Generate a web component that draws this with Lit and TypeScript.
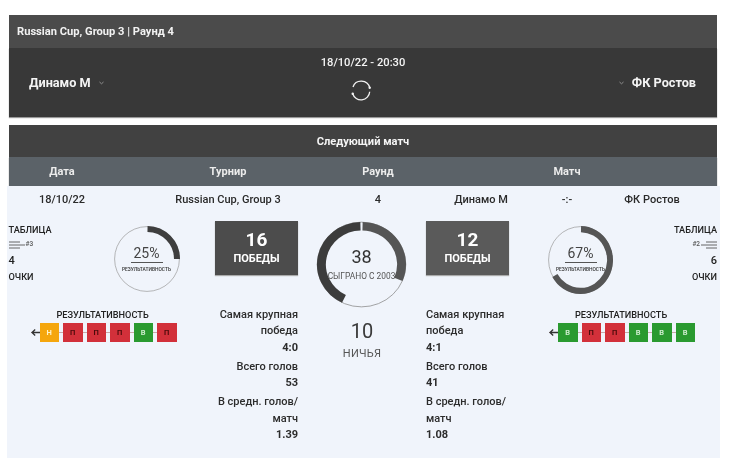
import { LitElement, html, css, svg } from "lit";
import { customElement } from "lit/decorators.js";

const polar = (cx: number, cy: number, r: number, deg: number) => {
  const a = ((deg - 90) * Math.PI) / 180;
  return [cx + r * Math.cos(a), cy + r * Math.sin(a)];
};
const arc = (cx: number, cy: number, r: number, from: number, to: number) => {
  const [x1, y1] = polar(cx, cy, r, from);
  const [x2, y2] = polar(cx, cy, r, to);
  return `M${x1.toFixed(2)} ${y1.toFixed(2)}A${r} ${r} 0 ${to - from > 180 ? 1 : 0} 1 ${x2.toFixed(2)} ${y2.toFixed(2)}`;
};

const chev = html`<svg class="chev" width="5" height="4" viewBox="0 0 5 4"><path d="M.5 1l2 1.8L4.500 1" fill="none" stroke="#8f8f8f" stroke-width="1"/></svg>`;

@customElement("app-root")
export class AppRoot extends LitElement {
  static styles = css`
    :host { display: block; width: 730px; height: 474px; background: #fff; font-family: Roboto, "Noto Sans", sans-serif; color: #222; overflow: hidden; filter: blur(0.4px); }
    .page { padding: 15px 13px 0 9px; display: flex; flex-direction: column; }
    .title { height: 33px; background: #4b4b4b; color: #f2f2f2; font-size: 11.15px; font-weight: 700; display: flex; align-items: center; padding-left: 8px; }
    .match { height: 69px; background: #383838; color: #f4f4f4; display: grid; grid-template-columns: 1fr auto 1fr; box-shadow: 0 1px 1px #999; }
    .team { display: flex; align-items: center; gap: 8px; font-size: 12.7px; font-weight: 700; height: 69px; }
    .team.l { padding-left: 20px; }
    .team.r { justify-content: flex-end; padding-right: 21px; }
    .mid { display: flex; flex-direction: column; align-items: center; font-size: 11.2px; font-weight: 500; padding-top: 8px; gap: 11px; }
    .sync { margin-right: 3px; }
    .next { margin-top: 8px; height: 32px; background: #414141; color: #f4f4f4; font-size: 11.1px; font-weight: 700; display: flex; align-items: center; justify-content: center; }
    .cols { display: grid; grid-template-columns: 106px 226px 74px 132px 40px 130px; text-align: center; }
    .head { height: 29px; align-items: center; background: #5b6268; color: #ececec; font-size: 11px; font-weight: 700; box-shadow: 0 1px 1px #888; }
    .span3 { grid-column: 4 / 7; padding-left: 2px; }
    .body { margin: 0 -3px 0 -2px; background: #f0f4fb; height: 272px; }
    .row { height: 26px; align-items: center; font-size: 11px; font-weight: 500; color: #2a2a2a; padding: 0 3px 0 2px; }
    .main { display: grid; grid-template-columns: 208px 83px 128px 83px 211px; padding-top: 9px; }
    .side { display: flex; flex-direction: column; }
    .top { display: flex; height: 88px; }
    .info { font-size: 9.2px; font-weight: 500; color: #222; display: flex; flex-direction: column; padding-top: 1px; }
    .info.l { flex: 0 0 105px; padding-left: 1.500px; align-items: flex-start; }
    .info.r { flex: 1; padding-right: 3px; align-items: flex-end; }
    .info span { height: 15.5px; line-height: 15.5px; display: flex; align-items: center; gap: 1px; }
    .info .pts { font-size: 11px; }
    .info .rank { font-size: 6.500px; color: #555; margin-top: -1px; height: 16.500px; }
    .donut { display: grid; width: 66px; height: 66px; margin-top: 5px; flex: none; }
    .donut.rd { margin-left: 39px; width: 65px; height: 68px; }
    .donut > * { grid-area: 1 / 1; }
    .dtext { display: flex; flex-direction: column; align-items: center; padding-top: 18px; }
    .pct { font-size: 14px; color: #444; line-height: 18px; border-bottom: 1px solid #555; padding: 0 3px; }
    .dlabel { font-size: 4.9px; color: #333; margin-top: 3px; font-weight: 500; }
    .form { display: flex; flex-direction: column; align-items: flex-start; }
    .form.l { padding-left: 23.500px; }
    .form.r { padding-left: 40px; }
    .ftitle { font-size: 9.2px; font-weight: 500; color: #222; line-height: 12px; height: 14px; padding-left: 26px; }
    .squares { display: flex; align-items: center; background: linear-gradient(#c9a9a9, #c9a9a9) center / 100% 1px no-repeat; }
    .arrow { flex: none; }
    .sq { width: 19.5px; height: 19px; color: #fff; font-size: 7.5px; font-weight: 700; display: flex; align-items: center; justify-content: center; margin-right: 4px; flex: none; }
    .sq:last-child { margin-right: 0; }
    .sq.w { background: #2a9a30; color: #cdeccd; }
    .sq.l { background: #d2303a; color: #4a0a0a; }
    .sq.d { background: #f5a60d; color: #fff3c8; }
    .stats { display: flex; flex-direction: column; }
    .wins { height: 54px; background: #4c4c4c; color: #fff; display: flex; flex-direction: column; align-items: center; justify-content: center; box-shadow: 0 1px 1px #aaa; }
    .wins.b { background: #5a5a5a; }
    .wins b { font-size: 19px; line-height: 22px; margin-top: -2px; }
    .wins i { font-style: normal; font-size: 11px; font-weight: 700; line-height: 14px; margin-bottom: 0; margin-top: 1px; }
    .lines { margin-top: 31.500px; font-size: 11px; font-weight: 500; color: #2c2c2c; display: flex; flex-direction: column; }
    .lines.l { text-align: right; }
    .lines.r { text-align: left; }
    .lines span { line-height: 16.5px; }
    .lines b { line-height: 16px; font-weight: 700; display: block; margin-bottom: 3px; }
    .center { display: flex; flex-direction: column; align-items: center; }
    .big { display: grid; width: 91px; height: 87px; margin-left: -1px; }
    .big > * { grid-area: 1 / 1; }
    .btext { display: flex; flex-direction: column; align-items: center; padding-top: 24px; }
    .btext b { font-size: 18px; font-weight: 400; color: #333; line-height: 24px; }
    .btext i { font-style: normal; font-size: 8.400px; color: #555; margin-top: 2px; }
    .draw { font-size: 20px; color: #3a3a3a; margin-top: 10px; line-height: 26px; }
    .drawl { font-size: 11px; color: #555; margin-top: 3px; letter-spacing: .3px; }
  `;

  sq(list: string[]) {
    const m: Record<string, [string, string]> = { w: ["w", "В"], l: ["l", "П"], d: ["d", "Н"] };
    return list.map((k) => html`<div class="sq ${m[k][0]}">${m[k][1]}</div>`);
  }
  arrow() {
    return html`<svg class="arrow" width="9" height="9" viewBox="0 0 9 9"><path d="M9 4.5H2M4.200 1.5L1 4.5l3.200 3" fill="none" stroke="#333" stroke-width="1.3"/></svg>`;
  }
  lines(flip: boolean) {
    return html`<svg width="16" height="8" viewBox="0 0 16 8">
      ${flip
        ? svg`<path d="M0 4h5M5 1h11M5 4h11M5 7h11" stroke="#555" stroke-width=".9" fill="none"/>`
        : svg`<path d="M0 1h11M0 4h11M0 7h11M11 4h5" stroke="#555" stroke-width=".9" fill="none"/>`}
    </svg>`;
  }
  donut(to: number, color: string, w = 66, h = 66) {
    return html`<svg width="${w}" height="${h}" viewBox="0 0 66 66" preserveAspectRatio="none">
      <circle cx="33" cy="33" r="32.4" fill="none" stroke="#9a9a9a" stroke-width=".7"/>
      <path d="${arc(33, 33, 30, 1, to)}" fill="none" stroke="${color}" stroke-width="6"/>
    </svg>`;
  }
  render() {
    return html`<div class="page">
      <div class="title">Russian Cup, Group 3 | Раунд 4</div>
      <div class="match">
        <div class="team l">Динамо М ${chev}</div>
        <div class="mid">
          <span>18/10/22 - 20:30</span>
          <svg class="sync" width="22" height="22" viewBox="0 0 22 22" fill="none" stroke="#f2f2f2" stroke-width="1.3">
            <path d="M3 7A8.700 8.700 0 0 1 19.700 7.700"/><path d="M19.700 11.700A8.700 8.700 0 0 1 2.700 13.700"/>
            <circle cx="19.700" cy="7.700" r="1.200" fill="#f2f2f2" stroke="none"/><circle cx="2.700" cy="13.700" r="1.200" fill="#f2f2f2" stroke="none"/>
          </svg>
        </div>
        <div class="team r">${chev} ФК Ростов</div>
      </div>
      <div class="next">Следующий матч</div>
      <div class="cols head">
        <div>Дата</div><div>Турнир</div><div>Раунд</div><div class="span3">Матч</div>
      </div>
      <div class="body">
        <div class="cols row">
          <div>18/10/22</div><div>Russian Cup, Group 3</div><div>4</div><div>Динамо М</div><div>-:-</div><div>ФК Ростов</div>
        </div>
        <div class="main">
          <div class="side">
            <div class="top">
              <div class="info l">
                <span>ТАБЛИЦА</span><span class="rank">${this.lines(false)}#3</span><span class="pts">4</span><span>ОЧКИ</span>
              </div>
              <div class="donut">
                ${this.donut(90, "#3e3e3e")}
                <div class="dtext"><div class="pct">25%</div><div class="dlabel">РЕЗУЛЬТАТИВНОСТЬ</div></div>
              </div>
            </div>
            <div class="form l">
              <div class="ftitle">РЕЗУЛЬТАТИВНОСТЬ</div>
              <div class="squares">${this.arrow()}${this.sq(["d", "l", "l", "l", "w", "l"])}</div>
            </div>
          </div>
          <div class="stats">
            <div class="wins"><b>16</b><i>ПОБЕДЫ</i></div>
            <div class="lines l">
              <span>Самая крупная победа</span><b>4:0</b>
              <span>Всего голов</span><b>53</b>
              <span>В средн. голов/ матч</span><b>1.39</b>
            </div>
          </div>
          <div class="center">
            <div class="big">
              <svg width="91" height="87" viewBox="0 0 92 92" preserveAspectRatio="none">
                <circle cx="46" cy="46" r="44.800" fill="none" stroke="#8a8a8a" stroke-width=".8"/>
                <path d="${arc(46, 46, 40.5, 206, 358.5)}" fill="none" stroke="#3c3c3c" stroke-width="9"/>
                <path d="${arc(46, 46, 40.5, 1.5, 113)}" fill="none" stroke="#555" stroke-width="9"/>
              </svg>
              <div class="btext"><b>38</b><i>СЫГРАНО С 2003</i></div>
            </div>
            <div class="draw">10</div>
            <div class="drawl">НИЧЬЯ</div>
          </div>
          <div class="stats">
            <div class="wins b"><b>12</b><i>ПОБЕДЫ</i></div>
            <div class="lines r">
              <span>Самая крупная победа</span><b>4:1</b>
              <span>Всего голов</span><b>41</b>
              <span>В средн. голов/ матч</span><b>1.08</b>
            </div>
          </div>
          <div class="side">
            <div class="top">
              <div class="donut rd">
                ${this.donut(240, "#555", 65, 68)}
                <div class="dtext"><div class="pct">67%</div><div class="dlabel">РЕЗУЛЬТАТИВНОСТЬ</div></div>
              </div>
              <div class="info r">
                <span>ТАБЛИЦА</span><span class="rank">#2${this.lines(true)}</span><span class="pts">6</span><span>ОЧКИ</span>
              </div>
            </div>
            <div class="form r">
              <div class="ftitle">РЕЗУЛЬТАТИВНОСТЬ</div>
              <div class="squares">${this.arrow()}${this.sq(["w", "l", "l", "w", "w", "w"])}</div>
            </div>
          </div>
        </div>
      </div>
    </div>`;
  }
}
